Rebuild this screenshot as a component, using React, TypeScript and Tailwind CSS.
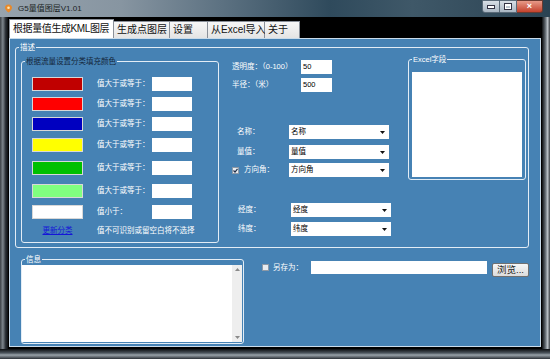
import React from 'react';

const FONT = "font-['Liberation_Sans','Noto_Sans_CJK_SC',sans-serif]";

const Legend: React.FC<{ text: string; dark?: boolean }> = ({ text, dark }) => (
  <span
    className={`absolute left-[3px] top-[-6px] px-[1px] bg-[#4682b4] text-[7.5px] leading-[11px] whitespace-nowrap ${
      dark ? 'text-[#14263a]' : 'text-white'
    }`}
  >
    {text}
  </span>
);

const TextBox: React.FC<{ w: string; value?: string }> = ({ w, value }) => (
  <div className={`${w} h-[14px] bg-white text-[7.5px] leading-[14px] text-black pl-[2px]`}>{value}</div>
);

const Select: React.FC<{ value: string }> = ({ value }) => (
  <div className="w-[100px] h-[14px] bg-white flex items-center justify-between pl-[2px] pr-[4px] text-[7.5px] text-black">
    <span>{value}</span>
    <svg width="5" height="3" viewBox="0 0 5 3">
      <path d="M0 0h5L2.5 3z" fill="#111" />
    </svg>
  </div>
);

const CheckBox: React.FC<{ checked?: boolean }> = ({ checked }) => (
  <div className="w-[7px] h-[7px] bg-[#e8ecf0] border border-[#8d99a6] flex items-center justify-center">
    {checked && (
      <svg width="5" height="5" viewBox="0 0 5 5">
        <path d="M0.5 2.5l1.5 1.5L4.5 0.8" stroke="#1c2c48" strokeWidth="1.2" fill="none" />
      </svg>
    )}
  </div>
);

const colorRows = [
  { color: 'bg-[#c00000]', label: '值大于或等于：', mt: 'mt-0' },
  { color: 'bg-[#ff0000]', label: '值大于或等于：', mt: 'mt-[6px]' },
  { color: 'bg-[#0000c0]', label: '值大于或等于：', mt: 'mt-[6px]' },
  { color: 'bg-[#ffff00]', label: '值大于或等于：', mt: 'mt-[7px]' },
  { color: 'bg-[#00c000]', label: '值大于或等于：', mt: 'mt-[9px]' },
  { color: 'bg-[#80ff80]', label: '值大于或等于：', mt: 'mt-[9px]' },
  { color: 'bg-white', label: '值小于：', mt: 'mt-[7px]' },
];

const tabs = [
  { text: '生成点图层', w: 'w-[56px]' },
  { text: '设置', w: 'w-[38px]' },
  { text: '从Excel导入', w: 'w-[57px]' },
  { text: '关于', w: 'w-[35px]' },
];

export default function App() {
  return (
    <div className={`w-[550px] h-[359px] flex flex-col bg-[#1d2a35] overflow-hidden ${FONT}`}>
      {/* title bar */}
      <div className="h-[17px] flex items-center bg-[linear-gradient(90deg,#97a3ad_0%,#8795a1_22%,#5d7282_40%,#2f4a5c_60%,#3f5868_75%,#2a4252_100%)]">
        <svg className="ml-[4px]" width="9" height="9" viewBox="0 0 9 9">
          <path d="M4.5 0.5C2.3 0.5 1 2 1 3.7 1 6 4.5 8.5 4.5 8.5S8 6 8 3.7C8 2 6.7 0.5 4.5 0.5z" fill="#e8892a" />
          <circle cx="4.5" cy="3.7" r="1.3" fill="#fde7b0" />
        </svg>
        <span className="ml-[5px] text-[8px] text-[#1a1f24]">G5量值图层V1.01</span>
        <div className="ml-auto mr-[7px] flex self-start">
          <div className="w-[18px] h-[13px] rounded-bl-[3px] border border-[#5a6a78] bg-[linear-gradient(#d8dfe6,#a9b6c2)] flex items-end justify-center pb-[3px]">
            <div className="w-[6px] h-[2px] bg-white border border-[#334] box-content" />
          </div>
          <div className="w-[17px] h-[13px] border-y border-r border-[#5a6a78] bg-[linear-gradient(#d8dfe6,#a9b6c2)] flex items-center justify-center">
            <div className="w-[6px] h-[5px] border border-white border-t-2 outline outline-1 outline-[#334]" />
          </div>
          <div className="w-[26px] h-[13px] rounded-br-[3px] border-y border-r border-[#6a3a30] bg-[linear-gradient(#e79a88,#c4412c)] flex items-center justify-center text-white text-[9px] font-bold leading-none">
            ×
          </div>
        </div>
      </div>

      <div className="flex flex-1">
        {/* left frame */}
        <div className="w-[8px] bg-[linear-gradient(90deg,#3a3f44,#7d858c_35%,#2b3036_70%,#0d0f11)]" />

        {/* client */}
        <div className="w-[534px] bg-black flex flex-col">
          {/* tabs */}
          <div className="h-[21px] flex items-end pl-[1px]">
            <div className="w-[105px] h-[19px] bg-white border-x border-t border-[#8a9099] pl-[3px] text-[10px] tracking-[-0.4px] leading-[18px] text-[#111] whitespace-nowrap overflow-hidden">
              根据量值生成KML图层
            </div>
            {tabs.map((t) => (
              <div
                key={t.text}
                className={`${t.w} h-[17px] border-r border-t border-[#8a9099] bg-[linear-gradient(#f7f7f7,#e4e4e4)] pl-[3px] text-[10px] leading-[16px] text-[#111] whitespace-nowrap`}
              >
                {t.text}
              </div>
            ))}
          </div>

          {/* tab page */}
          <div className="ml-[1px] w-[532px] h-[309px] bg-[#4682b4] border border-[#c9dbea] pt-[8px] pl-[5px] flex flex-col text-[7.5px] text-white">
            {/* 描述 */}
            <div className="relative w-[514px] h-[201px] border border-[#e3edf6] rounded-[3px] flex items-start">
              <Legend text="描述" />

              {/* left group */}
              <div className="relative ml-[5px] mt-[13px] w-[198px] h-[182px] border border-[#e3edf6] rounded-[3px] pl-[10px] pt-[15px]">
                <Legend text="根据流量设置分类填充颜色" dark />
                {colorRows.map((r, i) => (
                  <div key={i} className={`${r.mt} flex items-center h-[14px]`}>
                    <div className={`w-[51px] h-[14px] ${r.color} border border-[#d8d8d8]`} />
                    <span className="ml-[14px] w-[55px] whitespace-nowrap">{r.label}</span>
                    <TextBox w="w-[40px]" />
                  </div>
                ))}
                <div className="mt-[6px] flex items-center h-[12px]">
                  <span className="w-[51px] text-center text-[#1515d8] underline">更新分类</span>
                  <span className="ml-[14px] whitespace-nowrap">值不可识别或留空白将不选择</span>
                </div>
              </div>

              {/* middle column */}
              <div className="ml-[13px] mt-[12px] w-[160px] flex flex-col">
                <div className="flex items-center h-[14px]">
                  <span className="w-[69px] whitespace-nowrap">透明度：（0-100）</span>
                  <TextBox w="w-[31px]" value="50" />
                </div>
                <div className="mt-[4px] flex items-center h-[14px]">
                  <span className="w-[69px] whitespace-nowrap">半径：（米）</span>
                  <TextBox w="w-[31px]" value="500" />
                </div>
                <div className="mt-[33px] flex items-center h-[14px] pl-[5px]">
                  <span className="w-[52px]">名称：</span>
                  <Select value="名称" />
                </div>
                <div className="mt-[6px] flex items-center h-[14px] pl-[5px]">
                  <span className="w-[52px]">量值：</span>
                  <Select value="量值" />
                </div>
                <div className="mt-[4px] flex items-center h-[14px]">
                  <CheckBox checked />
                  <span className="ml-[5px] w-[45px]">方向角：</span>
                  <Select value="方向角" />
                </div>
                <div className="mt-[26px] flex items-center h-[14px] pl-[6px]">
                  <span className="w-[53px]">经度：</span>
                  <Select value="经度" />
                </div>
                <div className="mt-[5px] flex items-center h-[14px] pl-[6px]">
                  <span className="w-[53px]">纬度：</span>
                  <Select value="纬度" />
                </div>
              </div>

              {/* Excel字段 */}
              <div className="relative ml-[16px] mt-[11px] w-[118px] h-[121px] border border-[#e3edf6] rounded-[3px] pl-[3px] pt-[12px]">
                <Legend text="Excel字段" />
                <div className="w-[110px] h-[105px] bg-white" />
              </div>
            </div>

            {/* bottom row */}
            <div className="mt-[11px] ml-[6px] flex items-start">
              <div className="relative w-[223px] h-[85px] border border-[#e3edf6] rounded-[3px] pt-[5px] pr-[1px] pb-[1px]">
                <Legend text="信息" />
                <div className="w-full h-full bg-white flex justify-end">
                  <div className="w-[10px] h-full bg-[#eeeeee] flex flex-col items-center justify-between py-[3px]">
                    <svg width="5" height="3" viewBox="0 0 5 3">
                      <path d="M0 3h5L2.5 0z" fill="#8a8a8a" />
                    </svg>
                    <svg width="5" height="3" viewBox="0 0 5 3">
                      <path d="M0 0h5L2.5 3z" fill="#8a8a8a" />
                    </svg>
                  </div>
                </div>
              </div>

              <div className="ml-[18px] mt-[2px] flex items-start">
                <div className="h-[13px] flex items-center">
                  <CheckBox />
                  <span className="ml-[4px] w-[38px] whitespace-nowrap">另存为：</span>
                </div>
                <div className="w-[176px] h-[13px] bg-white" />
                <div className="ml-[5px] mt-[2px] w-[37px] h-[14px] rounded-[2px] border border-[#707070] bg-[linear-gradient(#f6f6f6,#dcdcdc)] text-[9.5px] leading-[12px] text-[#222] text-center">
                  浏览...
                </div>
              </div>
            </div>
          </div>
          <div className="flex-1" />
        </div>

        {/* right frame */}
        <div className="flex-1 bg-[linear-gradient(90deg,#0d0f11,#5d656c_40%,#b9c0c6_70%,#3a3f44)]" />
      </div>

      {/* bottom frame */}
      <div className="h-[10px] bg-[linear-gradient(#0c0e10,#4c555d_40%,#9aa3aa_60%,#2b3036)]" />
    </div>
  );
}
